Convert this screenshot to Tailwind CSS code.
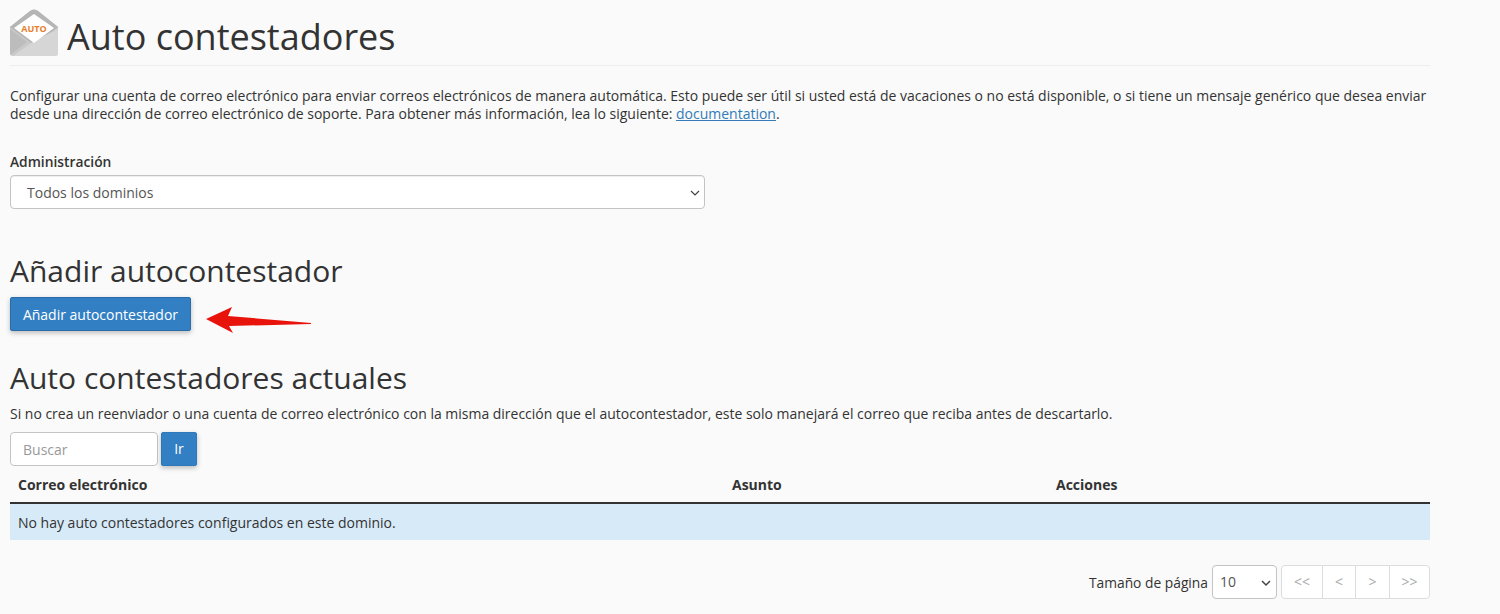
<!DOCTYPE html>
<html>

<head>
    <title>Auto contestadores</title>
    <meta charset="UTF-8">
    <script src="https://cdn.jsdelivr.net/npm/@tailwindcss/browser@4"></script>
</head>

<body class="bg-[#fafafa] text-[#333] text-[14px] leading-[20px] font-['Open_Sans',sans-serif] overflow-hidden">
    <div class="w-[1420px] ml-[10px] h-[614px]">
        <!-- header -->
        <div class="flex items-center h-[66px] border-b border-[#eeeeee] pt-[9px]">
            <svg class="w-[48px] h-[48px] mr-[9px] -mt-[9px] shrink-0" viewBox="0 0 48 48">
                <path d="M0 18 L20 2 Q24 -1 28 2 L48 18 V44 Q48 47 45 47 H3 Q0 47 0 44 Z" fill="#c9c9c9" />
                <path d="M0 18 L20 2 Q24 -1 28 2 L48 18 L24 36 Z" fill="#b5b5b5" />
                <path d="M0 20 L17 33 L0 46 Z" fill="#bcbcbc" />
                <path d="M48 20 V44 Q48 47 45 47 H3 L24 32 Z" fill="#d6d6d6" />
                <path d="M24 5 L44 19 L24 34 L4 19 Z" fill="#ffffff" />
                <text x="24" y="22.5" text-anchor="middle" font-size="9" font-weight="700" fill="#e8802f" font-family="'Open Sans',sans-serif">AUTO</text>
            </svg>
            <h1 class="text-[36px] leading-[40px] font-normal">Auto contestadores</h1>
        </div>

        <p class="mt-[21px] text-[13.99px] leading-[18px]">Configurar una cuenta de correo electrónico para enviar correos electrónicos de manera automática. Esto puede ser útil si usted está de vacaciones o no está disponible, o si tiene un mensaje genérico que desea enviar desde una dirección de correo electrónico de soporte. Para obtener más información, lea lo siguiente: <a href="#" class="text-[#337ab7] underline">documentation</a>.</p>

        <label class="block mt-[29px] font-semibold text-[13.8px]">Administración</label>
        <div class="relative mt-[3px] w-[695px] h-[34px] bg-white border border-[#c4c4c4] rounded-[4px] shadow-[inset_0_1px_1px_rgba(0,0,0,0.07)] flex items-center pl-[16px] pt-[1px] text-[#555]">
            Todos los dominios
            <svg class="absolute right-[4px] top-[12px] w-[10px] h-[10px]" viewBox="0 0 10 10" fill="none" stroke="#444" stroke-width="1.2">
                <path d="M1 3 L5 7 L9 3" />
            </svg>
        </div>

        <h2 class="text-[30px] leading-[34px] font-normal mt-[45px]">Añadir autocontestador</h2>
        <div class="flex items-start mt-[9px]">
            <button class="w-[181px] h-[34px] pt-[1px] bg-[#337fc4] border border-[#2a6ca8] rounded-[2px] text-white shadow-[0_2px_5px_rgba(0,0,0,0.25)]">Añadir autocontestador</button>
            <svg class="w-[106px] h-[28px] ml-[15px] mt-[9px]" viewBox="0 0 106 28">
                <path d="M0 13 L26 1 L22 10 L105 17 L105 18 L23 20 L27 27 Z" fill="#e8140c" />
            </svg>
        </div>

        <h2 class="text-[30px] leading-[34px] font-normal mt-[27px]">Auto contestadores actuales</h2>
        <p class="mt-[9px] text-[13.97px]">Si no crea un reenviador o una cuenta de correo electrónico con la misma dirección que el autocontestador, este solo manejará el correo que reciba antes de descartarlo.</p>

        <div class="flex mt-[8px]">
            <div class="w-[148px] h-[34px] bg-white border border-[#c4c4c4] rounded-[4px] flex items-center pl-[12px] pt-[1px] text-[#999]">Buscar</div>
            <button class="w-[36px] h-[34px] ml-[3px] bg-[#337fc4] border border-[#2f78b9] rounded-[2px] text-white shadow-[0_2px_5px_rgba(0,0,0,0.25)]">Ir</button>
        </div>

        <!-- table -->
        <table class="w-full mt-[1px] border-collapse table-fixed">
            <thead>
                <tr class="border-b-2 border-[#333] h-[36px]">
                    <th class="w-[722px] pl-[8px] text-left font-bold">Correo electrónico</th>
                    <th class="w-[324px] pl-[0px] text-left font-bold">Asunto</th>
                    <th class="pl-[0px] text-left font-bold">Acciones</th>
                </tr>
            </thead>
            <tbody>
                <tr class="bg-[#d7eaf8] h-[37px]">
                    <td colspan="3" class="pl-[8px] pt-[1px]">No hay auto contestadores configurados en este dominio.</td>
                </tr>
            </tbody>
        </table>

        <!-- paginacion -->
        <div class="flex justify-end items-center mt-[25px]">
            <span class="mr-[4px] pt-[1px] text-[13.8px]">Tamaño de página</span>
            <div class="relative w-[65px] h-[34px] bg-white border border-[#c4c4c4] rounded-[4px] flex items-center pl-[7px] text-[#555]">
                10
                <svg class="absolute right-[5px] top-[12px] w-[10px] h-[10px]" viewBox="0 0 10 10" fill="none" stroke="#444" stroke-width="1.5">
                    <path d="M1 3 L5 7 L9 3" />
                </svg>
            </div>
            <div class="flex ml-[4px] h-[34px] bg-white border border-[#dddddd] rounded-[4px] text-[#aaa]">
                <span class="w-[41px] flex items-center justify-center border-r border-[#dddddd]">&lt;&lt;</span>
                <span class="w-[33px] flex items-center justify-center border-r border-[#dddddd]">&lt;</span>
                <span class="w-[34px] flex items-center justify-center border-r border-[#dddddd]">&gt;</span>
                <span class="w-[39px] flex items-center justify-center">&gt;&gt;</span>
            </div>
        </div>
    </div>
</body>

</html>
